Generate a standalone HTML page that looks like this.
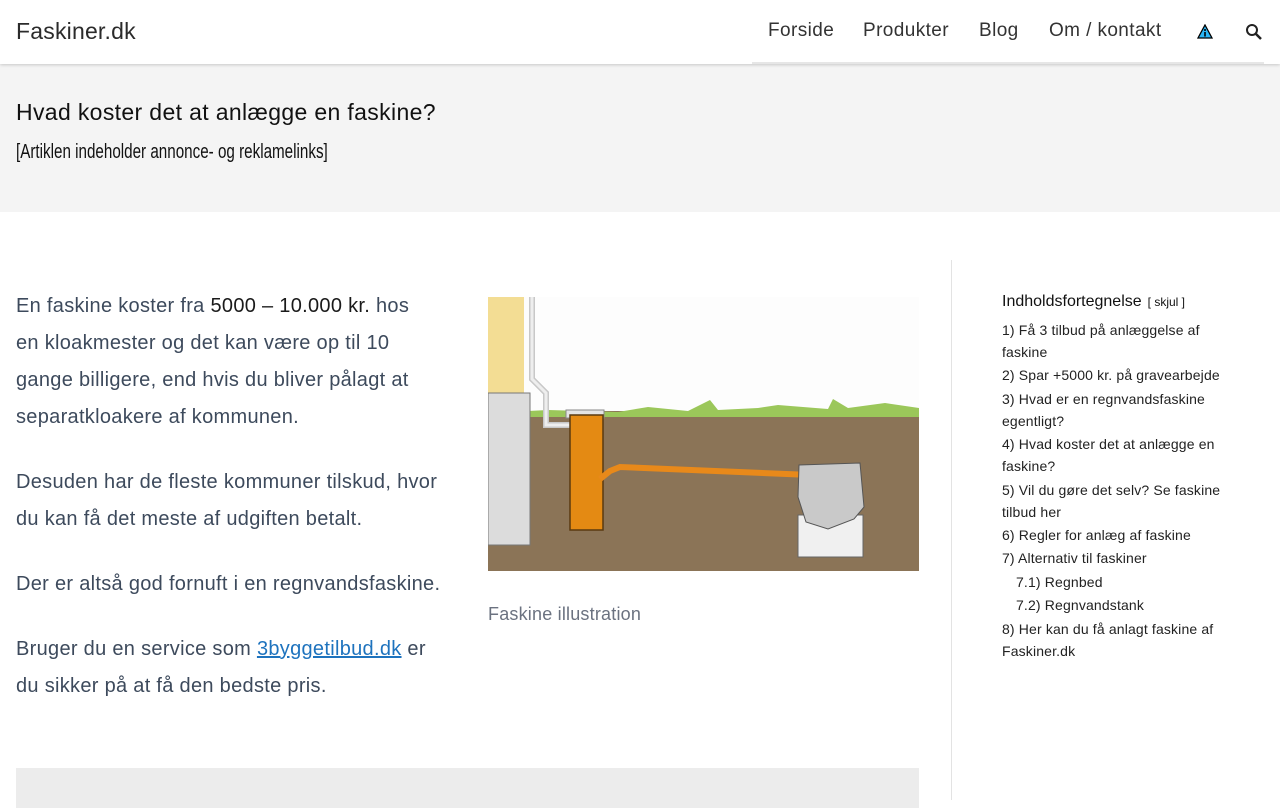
<!DOCTYPE html>
<html><head><meta charset="utf-8"><style>
*{margin:0;padding:0;box-sizing:border-box}
body{width:1280px;height:800px;overflow:hidden;background:#fff;font-family:"Liberation Sans",sans-serif;position:relative}
.hdr{position:absolute;left:0;top:0;width:1280px;height:64px;background:#fff;box-shadow:0 1px 3px rgba(0,0,0,.18);z-index:2}
.logo{position:absolute;left:16px;top:18px;font-size:23px;color:#2b2b2b;letter-spacing:.2px}
.nav{position:absolute;top:20px;font-size:19px;color:#333;letter-spacing:.4px}
.hero{position:absolute;left:0;top:64px;width:1280px;height:148px;background:#f4f4f4}
.hero h1{position:absolute;left:16px;top:35px;font-size:23px;font-weight:normal;color:#111;letter-spacing:.35px}
.hero .sub{position:absolute;left:16px;top:77px;font-size:20px;color:#111;transform:scaleX(.76);transform-origin:0 0;white-space:nowrap}
.txt{position:absolute;left:16px;top:288px;width:426px;font-size:20px;line-height:37px;color:#3d4a5c;letter-spacing:.3px}
.txt p{margin-bottom:28px}
.txt b{font-weight:normal;color:#1a1a1a}
.txt a{color:#1e73be;text-decoration:underline}
.cap{position:absolute;left:488px;top:604px;font-size:18px;color:#6b7280;letter-spacing:.2px}
.vline{position:absolute;left:951px;top:260px;width:1px;height:540px;background:#e3e3e3}
.toc{position:absolute;left:1002px;top:291px;width:230px;font-size:14px;color:#222;line-height:22px;letter-spacing:.15px}
.toc .t{font-size:16px;color:#111;margin-bottom:6px;letter-spacing:0}
.toc .t span{font-size:12px;margin-left:6px}
.toc div.i{margin-bottom:1.4px}
.box{position:absolute;left:16px;top:768px;width:903px;height:40px;background:#ececec}
</style></head><body>
<div class="hdr">
<div class="logo">Faskiner.dk</div>
<div class="nav" style="left:768px">Forside</div>
<div class="nav" style="left:863px">Produkter</div>
<div class="nav" style="left:979px">Blog</div>
<div class="nav" style="left:1049px">Om / kontakt</div>
<svg style="position:absolute;left:1197px;top:24px" width="16" height="15" viewBox="0 0 16 15"><path d="M8 1 L15 14 H1 Z" fill="#29b6f6" stroke="#000" stroke-width="1.3"/><rect x="7.2" y="5" width="1.6" height="2" fill="#000"/><rect x="7.2" y="8" width="1.6" height="4.5" fill="#000"/></svg>
<svg style="position:absolute;left:1245px;top:23px" width="18" height="18" viewBox="0 0 18 18"><circle cx="7" cy="7" r="5" fill="none" stroke="#222" stroke-width="2"/><path d="M10.5 10.5 L16 16" stroke="#222" stroke-width="2.5"/></svg>
<div style="position:absolute;left:752px;top:62px;width:512px;height:2px;background:#e6e6e6"></div>
</div>
<div class="hero"><h1>Hvad koster det at anlægge en faskine?</h1><div class="sub">[Artiklen indeholder annonce- og reklamelinks]</div></div>
<div class="txt">
<p>En faskine koster fra <b>5000 – 10.000 kr.</b> hos<br>en kloakmester og det kan være op til 10 gange billigere, end hvis du bliver pålagt at separatkloakere af kommunen.</p>
<p>Desuden har de fleste kommuner tilskud, hvor du kan få det meste af udgiften betalt.</p>
<p>Der er altså god fornuft i en regnvandsfaskine.</p>
<p>Bruger du en service som <a>3byggetilbud.dk</a> er du sikker på at få den bedste pris.</p>
</div>
<svg style="position:absolute;left:488px;top:297px" width="431" height="274" viewBox="0 0 431 274">
<rect width="431" height="274" fill="#fdfdfd"/>
<rect x="0" y="114" width="431" height="160" fill="#8b7457"/>
<path d="M0 116 L40 114 L60 113 L130 115 L160 110 L200 114 L222 103 L230 113 L270 111 L290 108 L340 112 L345 102 L360 111 L397 106 L431 111 L431 120 L0 120Z" fill="#9bc75a"/>
<rect x="0" y="0" width="36" height="96" fill="#f3dd94"/>
<rect x="0" y="96" width="42" height="152" fill="#dcdcdc" stroke="#777" stroke-width="1"/>
<path d="M44 0 V82 L58 96 V128 H82" fill="none" stroke="#c8c8c8" stroke-width="6"/>
<path d="M44 0 V82 L58 96 V128 H82" fill="none" stroke="#eee" stroke-width="3"/>
<rect x="78" y="113" width="38" height="8" fill="#e4e4e4" stroke="#888"/>
<rect x="82" y="118" width="33" height="115" fill="#e48a13" stroke="#5a3a10" stroke-width="1.5"/>
<path d="M112 182 L122 174 L132 170 L323 178" fill="none" stroke="#e8891a" stroke-width="6"/>
<rect x="310" y="218" width="65" height="42" fill="#f0f0f0" stroke="#666"/>
<path d="M311 168 L372 166 L376 210 L366 222 L340 232 L318 225 L310 200Z" fill="#c9c9c9" stroke="#555"/>
</svg>
<div class="cap">Faskine illustration</div>
<div class="vline"></div>
<div class="toc">
<div class="t">Indholdsfortegnelse<span>[ skjul ]</span></div>
<div class="i">1) Få 3 tilbud på anlæggelse af faskine</div>
<div class="i">2) Spar +5000 kr. på gravearbejde</div>
<div class="i">3) Hvad er en regnvandsfaskine egentligt?</div>
<div class="i">4) Hvad koster det at anlægge en faskine?</div>
<div class="i">5) Vil du gøre det selv? Se faskine tilbud her</div>
<div class="i">6) Regler for anlæg af faskine</div>
<div class="i">7) Alternativ til faskiner</div>
<div class="i" style="padding-left:14px">7.1) Regnbed</div>
<div class="i" style="padding-left:14px">7.2) Regnvandstank</div>
<div class="i">8) Her kan du få anlagt faskine af Faskiner.dk</div>
</div>
<div class="box"></div>
</body></html>
